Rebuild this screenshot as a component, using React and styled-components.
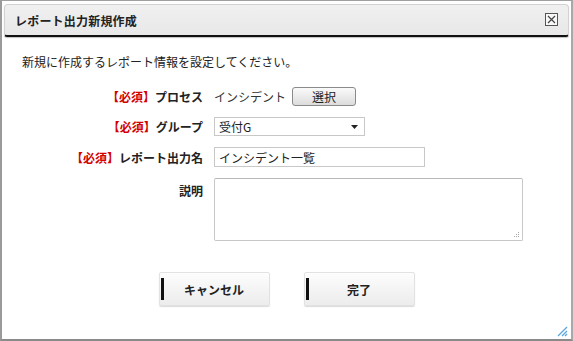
import React from "react"
import styled, { createGlobalStyle } from "styled-components"

const GlobalStyle = createGlobalStyle`
  html, body {
    margin: 0;
    padding: 0;
    background: #ffffff;
  }
  body {
    font-family: "Noto Sans CJK JP", "DejaVu Sans", sans-serif;
    font-size: 12px;
    color: #222222;
  }
`

const Dialog = styled.div`
  position: relative;
  box-sizing: border-box;
  width: 573px;
  height: 341px;
  border: 1px solid #a0a0a0;
  border-left: 2px solid #9a9a9a;
  border-bottom: 2px solid #8a8a8a;
  border-right: 2px solid #a8a8a8;
  background: #ffffff;
  padding: 3px 2px 0 2px;
`

const TitleBar = styled.div`
  display: flex;
  align-items: center;
  justify-content: space-between;
  height: 30px;
  padding: 0 10px 0 10px;
  background: linear-gradient(#f0f0f0, #e8e8e8);
  border: 1px solid #d2d2d2;
  border-bottom: 2px solid #111111;
  border-radius: 4px 4px 3px 3px;
  box-shadow: 0 1px 1px rgba(0, 0, 0, 0.25);
`

const Title = styled.h1`
  margin: 0;
  font-size: 12px;
  font-weight: bold;
  color: #222222;
  letter-spacing: 0.2px;
`

const CloseBox = styled.span`
  display: flex;
  width: 11px;
  height: 11px;
  border: 1px solid #555555;
  background: #f8f8f8;
  margin-top: -2px;
`

const Body = styled.div`
  padding: 18px 0 0 18px;
`

const Intro = styled.p`
  margin: 0 0 18px 0;
  font-size: 12px;
  line-height: 14px;
  color: #222222;
`

const Form = styled.div`
  display: grid;
  grid-template-columns: 181px 1fr;
  column-gap: 11px;
  row-gap: 11px;
  align-items: center;
`

const Label = styled.div`
  text-align: right;
  font-weight: bold;
  font-size: 12px;
  color: #222222;
  align-self: ${p => (p.$top ? "start" : "center")};
  padding-top: ${p => (p.$top ? "4px" : "0")};
`

const Required = styled.span`
  color: #d40000;
`

const Value = styled.div`
  display: flex;
  align-items: center;
  gap: 6px;
  height: ${p => p.$h || 19}px;
`

const PlainText = styled.span`
  font-size: 12px;
  color: #333333;
`

const SmallButton = styled.button`
  width: 64px;
  height: 19px;
  padding: 0;
  font-family: inherit;
  font-size: 12px;
  color: #222222;
  border: 1px solid #8a8a8a;
  border-radius: 3px;
  background: linear-gradient(#fafafa, #dcdcdc);
`

const SelectBox = styled.div`
  box-sizing: border-box;
  display: flex;
  align-items: center;
  justify-content: space-between;
  width: 151px;
  height: 19px;
  padding: 0 6px 0 4px;
  border: 1px solid #c8c8c8;
  background: #ffffff;
  font-size: 12px;
  color: #222222;
`

const TextInput = styled.div`
  box-sizing: border-box;
  display: flex;
  align-items: center;
  width: 211px;
  height: 20px;
  padding: 0 4px;
  border: 1px solid #c8c8c8;
  background: #ffffff;
  font-size: 12px;
  color: #222222;
`

const TextArea = styled.div`
  position: relative;
  box-sizing: border-box;
  width: 309px;
  height: 63px;
  border: 1px solid #c8c8c8;
  border-top-color: #b8b8b8;
  border-radius: 2px;
  background: #ffffff;
`

const Grip = styled.svg`
  position: absolute;
  right: 2px;
  bottom: 2px;
`

const Actions = styled.div`
  display: flex;
  justify-content: center;
  gap: 34px;
  margin: 31px 0 0 -18px;
`

const ActionButton = styled.button`
  position: relative;
  box-sizing: border-box;
  width: 111px;
  height: 34px;
  padding: 0;
  font-family: inherit;
  font-size: 12px;
  font-weight: bold;
  color: #222222;
  border: 1px solid #e2e2e2;
  border-radius: 2px;
  background: linear-gradient(#fdfdfd, #ececec);
  box-shadow: 0 1px 1px rgba(0, 0, 0, 0.15);

  &::before {
    content: "";
    position: absolute;
    left: 1px;
    top: 5px;
    bottom: 5px;
    width: 3px;
    background: #111111;
  }
`

const ResizeGrip = styled.svg`
  position: absolute;
  right: 3px;
  bottom: 2px;
`

const App = () => {
  return (
    <>
      <GlobalStyle />
      <Dialog>
        <TitleBar>
          <Title>レポート出力新規作成</Title>
          <CloseBox>
            <svg width="11" height="11" viewBox="0 0 11 11">
              <path d="M2 2 L9 9 M9 2 L2 9" stroke="#444" strokeWidth="1.2" />
            </svg>
          </CloseBox>
        </TitleBar>
        <Body>
          <Intro>新規に作成するレポート情報を設定してください。</Intro>
          <Form>
            <Label><Required>【必須】</Required>プロセス</Label>
            <Value>
              <PlainText>インシデント</PlainText>
              <SmallButton>選択</SmallButton>
            </Value>

            <Label><Required>【必須】</Required>グループ</Label>
            <Value>
              <SelectBox>
                <span>受付G</span>
                <svg width="7" height="4" viewBox="0 0 7 4">
                  <path d="M0 0 L7 0 L3.5 4 Z" fill="#222" />
                </svg>
              </SelectBox>
            </Value>

            <Label><Required>【必須】</Required>レポート出力名</Label>
            <Value $h={20}>
              <TextInput>インシデント一覧</TextInput>
            </Value>

            <Label $top>説明</Label>
            <Value $h={63}>
              <TextArea>
                <Grip width="6" height="6" viewBox="0 0 6 6">
                  <rect x="4" y="0" width="1" height="1" fill="#aaa" />
                  <rect x="2" y="2" width="1" height="1" fill="#aaa" />
                  <rect x="4" y="2" width="1" height="1" fill="#aaa" />
                  <rect x="0" y="4" width="1" height="1" fill="#aaa" />
                  <rect x="2" y="4" width="1" height="1" fill="#aaa" />
                  <rect x="4" y="4" width="1" height="1" fill="#aaa" />
                </Grip>
              </TextArea>
            </Value>
          </Form>
          <Actions>
            <ActionButton>キャンセル</ActionButton>
            <ActionButton>完了</ActionButton>
          </Actions>
        </Body>
        <ResizeGrip width="11" height="11" viewBox="0 0 11 11">
          <path d="M10 1 L1 10 M10 5 L5 10 M10 8 L8 10" stroke="#5aa7e0" strokeWidth="1.3" />
        </ResizeGrip>
      </Dialog>
    </>
  )
}

export default App
